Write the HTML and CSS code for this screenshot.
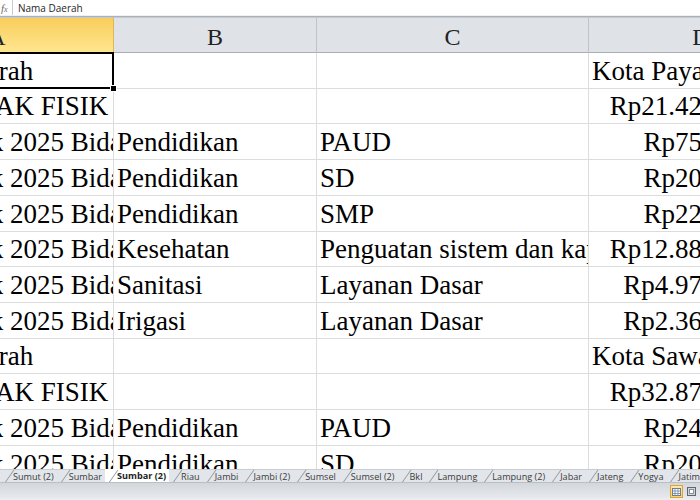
FILE: index.html
```html
<!DOCTYPE html>
<html>
<head>
<meta charset="utf-8">
<link rel="stylesheet" href="styles.css">
</head>
<body>
<div class="app">
  <div class="formula">
    <span class="fx">f<span class="fxs">x</span></span>
    <span class="fval">Nama Daerah</span>
  </div>
  <div class="sheet">
    <div class="grid">
      <div class="hd sel">A</div><div class="hd">B</div><div class="hd">C</div><div class="hd">D</div>

      <div class="c sel">Nama Daerah</div><div class="c"></div><div class="c"></div><div class="c">Kota Payakumbuh</div>
      <div class="c">TOTAL DAK FISIK</div><div class="c"></div><div class="c"></div><div class="c num">Rp21.426.123.000</div>
      <div class="c">DAK Fisik 2025 Bidang Pendidikan</div><div class="c">Pendidikan</div><div class="c">PAUD</div><div class="c num">Rp751.240.000</div>
      <div class="c">DAK Fisik 2025 Bidang Pendidikan</div><div class="c">Pendidikan</div><div class="c">SD</div><div class="c num">Rp203.518.000</div>
      <div class="c">DAK Fisik 2025 Bidang Pendidikan</div><div class="c">Pendidikan</div><div class="c">SMP</div><div class="c num">Rp221.760.000</div>
      <div class="c">DAK Fisik 2025 Bidang Kesehatan</div><div class="c">Kesehatan</div><div class="c">Penguatan sistem dan kapasitas layanan</div><div class="c num">Rp12.881.405.000</div>
      <div class="c">DAK Fisik 2025 Bidang Sanitasi</div><div class="c">Sanitasi</div><div class="c">Layanan Dasar</div><div class="c num">Rp4.971.200.000</div>
      <div class="c">DAK Fisik 2025 Bidang Irigasi</div><div class="c">Irigasi</div><div class="c">Layanan Dasar</div><div class="c num">Rp2.362.000.000</div>
      <div class="c">Nama Daerah</div><div class="c"></div><div class="c"></div><div class="c">Kota Sawahlunto</div>
      <div class="c">TOTAL DAK FISIK</div><div class="c"></div><div class="c"></div><div class="c num">Rp32.874.310.000</div>
      <div class="c">DAK Fisik 2025 Bidang Pendidikan</div><div class="c">Pendidikan</div><div class="c">PAUD</div><div class="c num">Rp245.180.000</div>
      <div class="c">DAK Fisik 2025 Bidang Pendidikan</div><div class="c">Pendidikan</div><div class="c">SD</div><div class="c num">Rp209.600.000</div>
      <div class="c">DAK Fisik 2025 Bidang Pendidikan</div><div class="c">Pendidikan</div><div class="c">SMP</div><div class="c num">Rp238.450.000</div>
    </div>
  </div>
  <div class="tabs">
    <span class="tab">Sumut (2)</span>
    <span class="tab">Sumbar</span>
    <span class="tab active">Sumbar (2)</span>
    <span class="tab">Riau</span>
    <span class="tab">Jambi</span>
    <span class="tab">Jambi (2)</span>
    <span class="tab">Sumsel</span>
    <span class="tab">Sumsel (2)</span>
    <span class="tab">Bkl</span>
    <span class="tab">Lampung</span>
    <span class="tab">Lampung (2)</span>
    <span class="tab">Jabar</span>
    <span class="tab">Jateng</span>
    <span class="tab">Yogya</span>
    <span class="tab">Jatim</span>
  </div>
  <div class="status">
    <span class="vbtn on">
      <svg width="9" height="8" viewBox="0 0 9 8"><rect x="0.5" y="0.5" width="8" height="7" fill="#fff" stroke="#6a7a90"/><path d="M0.5 3H8.5M0.5 5.5H8.5M3 0.5V7.5M6 0.5V7.5" stroke="#8a98aa" stroke-width="1"/></svg>
    </span>
    <span class="vbtn">
      <svg width="9" height="9" viewBox="0 0 9 9"><rect x="0.5" y="0.5" width="8" height="8" fill="#d0d4d9" stroke="#5d6672"/><rect x="2.5" y="2.5" width="4" height="4" fill="#fff" stroke="#8a929c"/></svg>
    </span>
    <span class="vbtn">
      <svg width="9" height="9" viewBox="0 0 9 9"><rect x="0.5" y="0.5" width="8" height="8" fill="#d0d4d9" stroke="#5d6672"/></svg>
    </span>
  </div>
</div>
</body>
</html>
```

FILE: styles.css
```css
* { box-sizing: border-box; }

body {
  margin: 0;
  width: 700px;
  height: 500px;
  overflow: hidden;
  background: #fff;
  font-family: "Liberation Serif", "Times New Roman", serif;
}

.app {
  display: flex;
  flex-direction: column;
  height: 500px;
  width: 700px;
  overflow: hidden;
}

.formula {
  flex: none;
  height: 17px;
  display: flex;
  align-items: stretch;
  border-bottom: 1px solid #a9b1bb;
  box-shadow: inset 0 -1px 0 #eef0f2;
  padding-bottom: 1px;
  background: #fff;
}

.fx {
  width: 13px;
  border-right: 1px solid #c8ccd1;
  display: flex;
  align-items: center;
  padding-left: 1px;
  font: italic 11px "Liberation Serif", serif;
  color: #6d6d6d;
}

.fxs {
  font-size: 8px;
  position: relative;
  top: 2px;
}

.fval {
  display: flex;
  align-items: center;
  padding-left: 5px;
  font: 10px "Open Sans", "Noto Sans", sans-serif;
  color: #1e1e1e;
}

.sheet {
  flex: 1;
  min-height: 0;
  overflow: hidden;
}

.grid {
  display: grid;
  grid-template-columns: 233px 203px 272px 225px;
  grid-template-rows: 36px;
  grid-auto-rows: 35.73px;
  margin-left: -119px;
  width: 933px;
}

.hd {
  background: #dfe3e8;
  border-top: 1px solid #c6cacf;
  border-right: 1px solid #c0c4c9;
  border-bottom: 1px solid #a9aeb4;
  display: flex;
  align-items: flex-end;
  justify-content: center;
  padding-bottom: 1px;
  font-size: 24px;
  color: #222;
}

.hd.sel {
  background: linear-gradient(#f8cd5c, #ffe68f);
  border-bottom: 1px solid #e5a63a;
  border-right-color: #e4b558;
}

.c {
  border-right: 1px solid #dadcde;
  border-bottom: 1px solid #dadcde;
  display: flex;
  align-items: flex-end;
  padding: 0 3px 2px 3px;
  font-size: 27px;
  line-height: 30px;
  white-space: nowrap;
  overflow: hidden;
  color: #000;
  background: #fff;
}

.c.num {
  justify-content: flex-end;
}

.c.sel {
  position: relative;
  overflow: visible;
  z-index: 2;
}

.c.sel::after {
  content: "";
  position: absolute;
  top: -1px;
  left: -2px;
  right: -1px;
  bottom: -1px;
  border: 2px solid #000;
}

.c.sel::before {
  content: "";
  position: absolute;
  right: -3px;
  bottom: -3px;
  width: 5px;
  height: 5px;
  background: #000;
  outline: 1px solid #fff;
  z-index: 3;
}

.tabs {
  flex: none;
  height: 13px;
  display: flex;
  align-items: stretch;
  background: #e2e5e9;
  border-top: 1px solid #c9cdd2;
  padding-left: 1px;
  font: 9.1px "Open Sans", "Noto Sans", sans-serif;
  color: #3b3b3b;
  white-space: nowrap;
}

.tab {
  position: relative;
  display: flex;
  align-items: center;
  padding: 0 3px 0 12px;
}

.tab::before {
  content: "";
  position: absolute;
  left: 4px;
  bottom: 0;
  width: 1px;
  height: 12px;
  background: #8f979f;
  transform: skewX(-35deg);
  transform-origin: bottom left;
}

.tab.active {
  background: #fff;
  font-weight: bold;
  color: #222;
  margin-top: -1px;
}

.status {
  flex: none;
  height: 18px;
  display: flex;
  align-items: center;
  gap: 2px;
  padding-left: 670px;
  background: linear-gradient(#d3d7dc, #e4e7eb 80%, #eef0f2);
  border-top: 1px solid #b9bfc6;
}

.vbtn {
  flex: none;
  width: 13px;
  height: 13px;
  display: flex;
  align-items: center;
  justify-content: center;
}

.vbtn.on {
  background: linear-gradient(#fde9a8, #f9d46a);
  border: 1px solid #dca33c;
}
```
